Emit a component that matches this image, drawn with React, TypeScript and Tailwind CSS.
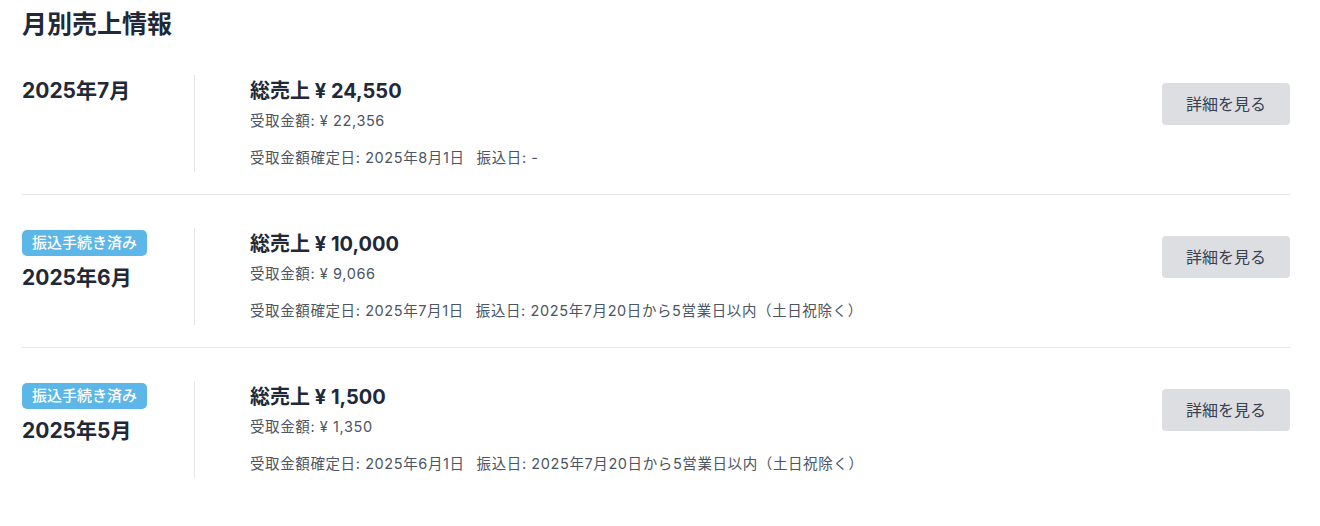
import React from "react";

type Row = {
  month: string;
  badge: boolean;
  total: string;
  received: string;
  fixedDate: string;
  transfer: string;
};

const rows: Row[] = [
  { month: "2025年7月", badge: false, total: "24,550", received: "22,356", fixedDate: "2025年8月1日", transfer: "-" },
  { month: "2025年6月", badge: true, total: "10,000", received: "9,066", fixedDate: "2025年7月1日", transfer: "2025年7月20日から5営業日以内（土日祝除く）" },
  { month: "2025年5月", badge: true, total: "1,500", received: "1,350", fixedDate: "2025年6月1日", transfer: "2025年7月20日から5営業日以内（土日祝除く）" },
];

export default function App() {
  return (
    <div
      className="min-h-[526px] bg-white pl-[22px] pr-[30px] text-[#1f2937]"
      style={{ fontFamily: 'Inter, "Noto Sans CJK JP", sans-serif' }}
    >
      <h1 className="h-[42px] pt-[8px] text-[25px] font-bold leading-8">月別売上情報</h1>
      <div>
        {rows.map((r, i) => (
          <div key={i} className={`flex pt-[33px] pb-[22px] ${i < rows.length - 1 ? "border-b border-[#e5e7eb]" : ""}`}>
            <div className="w-[172px] shrink-0 pt-[2px]">
              {r.badge && (
                <div className="-mt-px mb-[8px] inline-flex h-[26px] items-center rounded-[5px] bg-[#5cb6e8] px-[10px] text-[15px] font-medium text-white">
                  振込手続き済み
                </div>
              )}
              <div className="text-[21px] font-bold leading-7">{r.month}</div>
            </div>
            <div className="flex flex-1 border-l border-[#e5e7eb] pl-[55px]">
              <div className="flex-1 pt-[2px] pb-[4px]">
                <div className="text-[20px] font-bold leading-7">総売上 ¥ {r.total}</div>
                <div className="mt-[6px] text-[14.5px] leading-5 tracking-[0.6px] text-[#4b5563]">受取金額: ¥ {r.received}</div>
                <div className="mt-[17px] text-[14.5px] leading-5 tracking-[0.6px] text-[#4b5563]">
                  受取金額確定日: {r.fixedDate}
                  <span className="ml-3">振込日: {r.transfer}</span>
                </div>
              </div>
              <div className="pt-2">
                <button className="h-[42px] w-[128px] rounded-[4px] bg-[#dddee2] text-[16px] leading-6 text-[#374151]">
                  詳細を見る
                </button>
              </div>
            </div>
          </div>
        ))}
      </div>
    </div>
  );
}
